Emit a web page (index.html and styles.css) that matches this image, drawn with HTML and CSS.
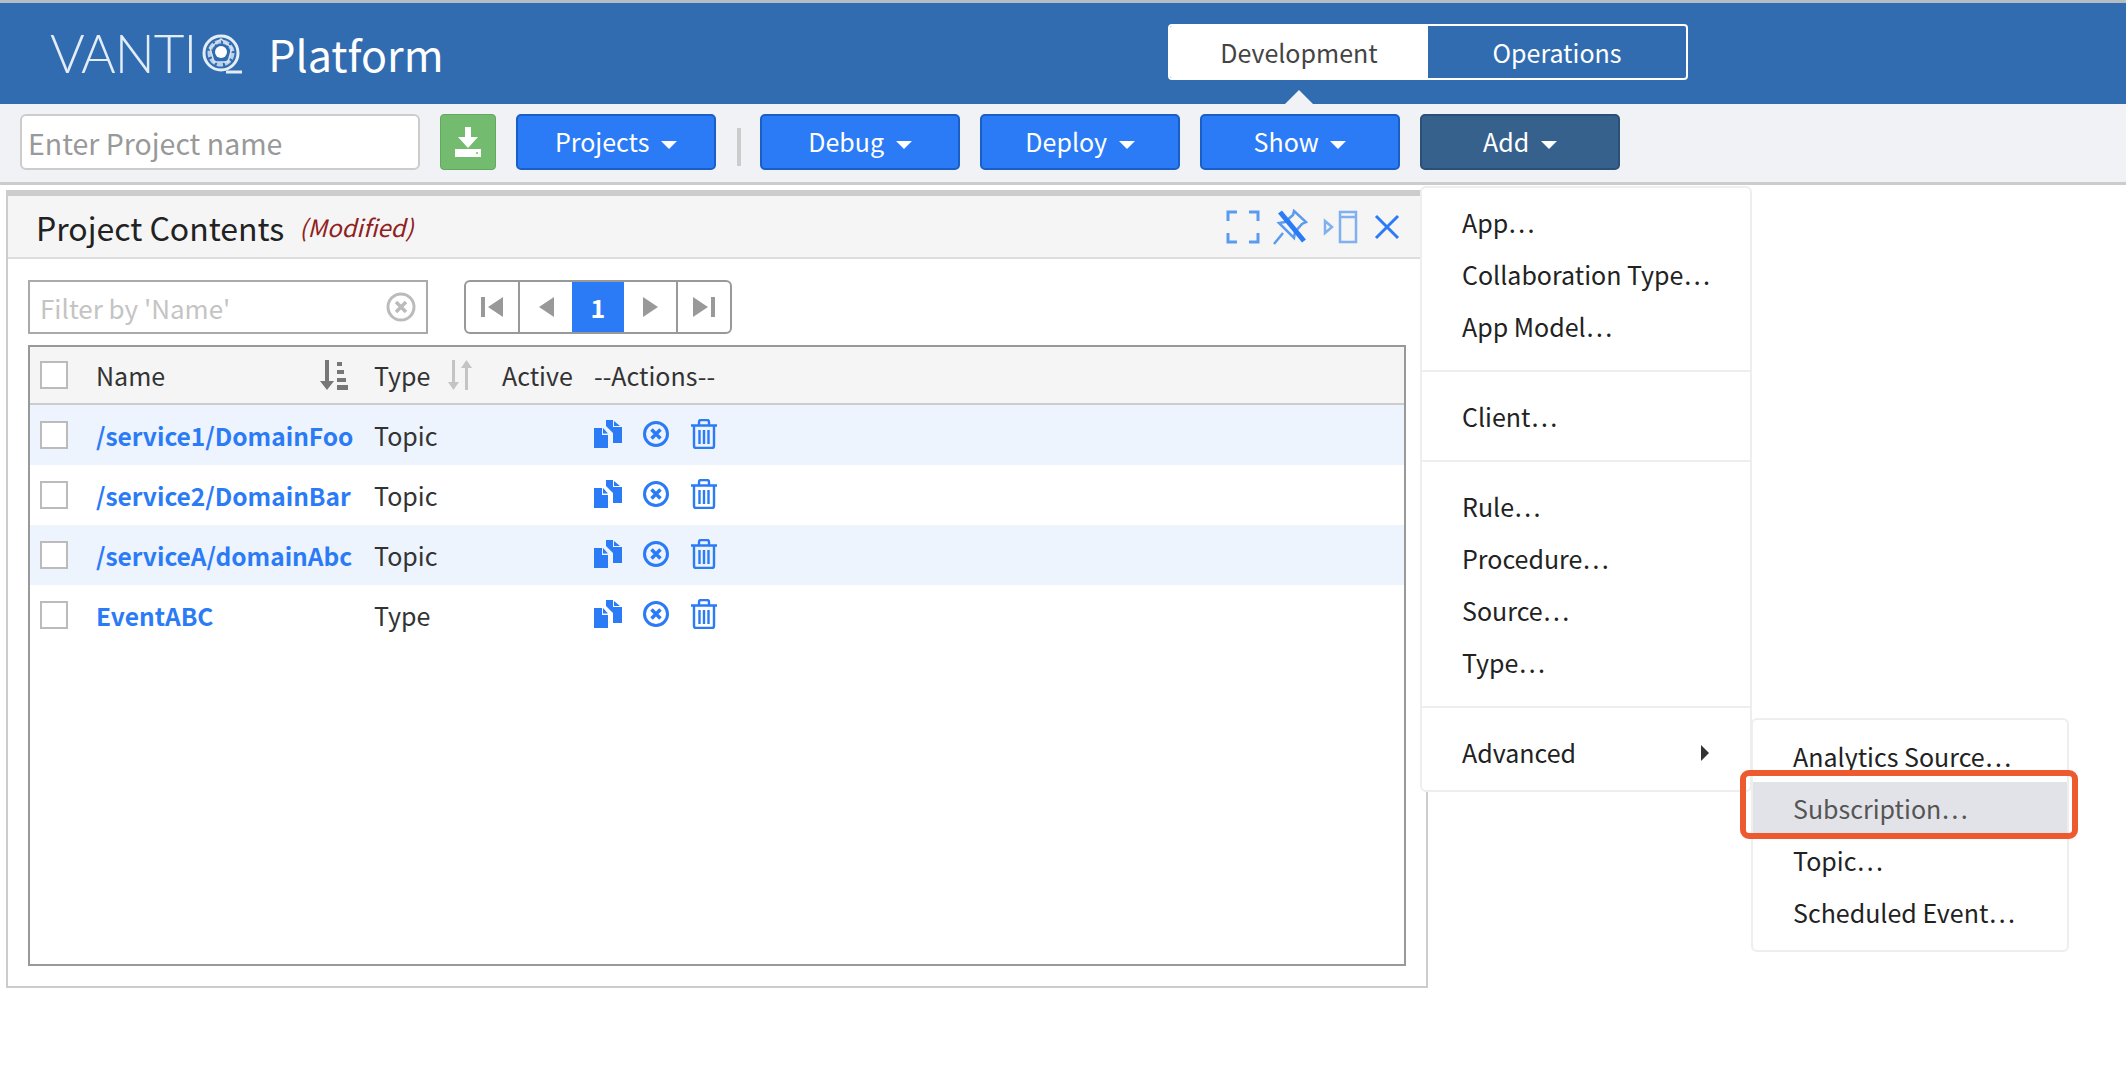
FILE: index.html
```html
<!DOCTYPE html>
<html>
<head>
  <title>VANTIQ Platform</title>
  <link rel="stylesheet" href="styles.css">
</head>
<body>
  <svg class="defs" width="0" height="0">
    <symbol id="i-copy" viewBox="0 0 28 28">
      <path d="M0 8h8v7h6v13H0z M9 8l5 5.500H9z"/>
      <path d="M12 0h7v7h9v16h-9V13l-7-7z M20 1l6 5h-6z"/>
    </symbol>
    <symbol id="i-cancel" viewBox="0 0 28 28">
      <circle cx="14" cy="14" r="11.500" fill="none" stroke="currentColor" stroke-width="3"/>
      <path d="M9.500 9.500l9 9m0-9l-9 9" fill="none" stroke="currentColor" stroke-width="3.500"/>
    </symbol>
    <symbol id="i-trash" viewBox="0 0 28 30">
      <path d="M1 6.500h26M9 6V3a2 2 0 0 1 2-2h6a2 2 0 0 1 2 2v3M4 7v20a2 2 0 0 0 2 2h16a2 2 0 0 0 2-2V7M9.500 11v14M14 11v14M18.500 11v14" fill="none" stroke="currentColor" stroke-width="2.400"/>
    </symbol>
  </svg>

  <header class="topbar">
    <div class="brand">
      <span class="brand-logo">VANTI</span>
      <svg class="brand-q" viewBox="0 0 40 40" width="40" height="40">
        <circle cx="19" cy="19" r="17" fill="none" stroke="#e3edf7" stroke-width="3"/>
        <circle cx="19" cy="19" r="11.500" fill="none" stroke="#b9d0e8" stroke-width="4" stroke-dasharray="6 2"/>
        <path d="M8 14l11-9 11 9-4 14H12z" fill="none" stroke="#d5e3f2" stroke-width="1.500"/>
        <circle cx="19" cy="18" r="6" fill="#fff"/>
        <path d="M24 38h16" stroke="#e3edf7" stroke-width="3"/>
      </svg>
      <span class="brand-name">Platform</span>
    </div>
    <div class="mode-tabs">
      <a class="mode-tab active">Development</a>
      <a class="mode-tab">Operations</a>
    </div>
    <span class="mode-caret"></span>
  </header>

  <div class="toolbar">
    <input class="project-input" type="text" placeholder="Enter Project name">
    <button class="btn-save" type="button">
      <svg viewBox="0 0 26 30" width="26" height="30">
        <path d="M10 0h6v10h7L13 21 3 10h7z" fill="#fff"/>
        <path d="M0 22h26v8H0z" fill="#fff"/>
        <circle cx="22" cy="26" r="1" fill="#72bb6f"/>
      </svg>
    </button>
    <button class="btn" type="button">Projects <i class="caret"></i></button>
    <span class="sep"></span>
    <button class="btn" type="button">Debug <i class="caret"></i></button>
    <button class="btn" type="button">Deploy <i class="caret"></i></button>
    <button class="btn" type="button">Show <i class="caret"></i></button>
    <button class="btn open" type="button">Add <i class="caret"></i></button>
  </div>

  <section class="panel">
    <div class="panel-head">
      <h2>Project Contents</h2>
      <em>(Modified)</em>
      <div class="panel-tools">
        <svg viewBox="0 0 34 34" width="34" height="34" fill="none" stroke="#5b9bef" stroke-width="3">
          <path d="M11 2H2v9M23 2h9v9M2 23v9h9M32 23v9h-9"/>
        </svg>
        <svg viewBox="0 0 36 36" width="36" height="36" fill="none" stroke="#5b9bef" stroke-width="2.500">
          <path d="M22 2l12 11-4 2-7 8-1 6-15-15 6-1 8-7z"/>
          <path d="M11 24L2 35"/>
          <path d="M8 3l24 29" stroke="#2b7bf6" stroke-width="5"/>
        </svg>
        <svg viewBox="0 0 36 34" width="36" height="34" fill="none" stroke="#7fb0f0" stroke-width="2.500">
          <path d="M2 11l7 6-7 6z"/>
          <path d="M17 2h16v30H17zM17 7h16"/>
        </svg>
        <svg viewBox="0 0 26 26" width="26" height="26" fill="none" stroke="#2b7bf6" stroke-width="3">
          <path d="M2 2l22 22M24 2L2 24"/>
        </svg>
      </div>
    </div>

    <div class="panel-body">
      <div class="filter-row">
        <div class="filter">
          <input type="text" placeholder="Filter by 'Name'">
          <svg viewBox="0 0 30 30" width="30" height="30">
            <circle cx="15" cy="15" r="13" fill="none" stroke="#bbb" stroke-width="3"/>
            <path d="M10 10l10 10m0-10L10 20" stroke="#bbb" stroke-width="3.500"/>
          </svg>
        </div>
        <div class="pager">
          <a class="first"><svg viewBox="0 0 22 20" width="22" height="20"><path d="M0 0h4v20H0zM22 0v20L7 10z"/></svg></a>
          <a><svg viewBox="0 0 15 20" width="15" height="20"><path d="M15 0v20L0 10z"/></svg></a>
          <a class="current">1</a>
          <a><svg viewBox="0 0 15 20" width="15" height="20"><path d="M0 0v20l15-10z"/></svg></a>
          <a class="last"><svg viewBox="0 0 22 20" width="22" height="20"><path d="M18 0h4v20h-4zM0 0v20l15-10z"/></svg></a>
        </div>
      </div>

      <div class="grid">
        <div class="grid-row grid-head">
          <span class="cb"></span>
          <span class="col-name">Name
            <svg viewBox="0 0 28 30" width="28" height="30" fill="#777">
              <path d="M5 0h4v21h5l-7 9-7-9h5z"/>
              <path d="M17 2h5v4h-5zM17 10h7v4h-7zM17 18h9v4h-9zM17 25h11v5H17z"/>
            </svg>
          </span>
          <span class="col-type">Type
            <svg viewBox="0 0 24 30" width="24" height="30" fill="#c4c4c4">
              <path d="M4 0h3v22h4l-5.500 8L0 22h4zM17 30h3V8h4l-5.500-8L13 8h4z"/>
            </svg>
          </span>
          <span class="col-active">Active</span>
          <span class="col-actions">--Actions--</span>
        </div>
        <div class="grid-row striped">
          <span class="cb"></span>
          <a class="col-name">/service1/DomainFoo</a>
          <span class="col-type">Topic</span>
          <span class="col-active"></span>
          <span class="col-actions icons">
            <svg class="ic" width="28" height="28"><use href="#i-copy"/></svg>
            <svg class="ic" width="28" height="28"><use href="#i-cancel"/></svg>
            <svg class="ic" width="28" height="30"><use href="#i-trash"/></svg>
          </span>
        </div>
        <div class="grid-row">
          <span class="cb"></span>
          <a class="col-name">/service2/DomainBar</a>
          <span class="col-type">Topic</span>
          <span class="col-active"></span>
          <span class="col-actions icons">
            <svg class="ic" width="28" height="28"><use href="#i-copy"/></svg>
            <svg class="ic" width="28" height="28"><use href="#i-cancel"/></svg>
            <svg class="ic" width="28" height="30"><use href="#i-trash"/></svg>
          </span>
        </div>
        <div class="grid-row striped">
          <span class="cb"></span>
          <a class="col-name">/serviceA/domainAbc</a>
          <span class="col-type">Topic</span>
          <span class="col-active"></span>
          <span class="col-actions icons">
            <svg class="ic" width="28" height="28"><use href="#i-copy"/></svg>
            <svg class="ic" width="28" height="28"><use href="#i-cancel"/></svg>
            <svg class="ic" width="28" height="30"><use href="#i-trash"/></svg>
          </span>
        </div>
        <div class="grid-row">
          <span class="cb"></span>
          <a class="col-name">EventABC</a>
          <span class="col-type">Type</span>
          <span class="col-active"></span>
          <span class="col-actions icons">
            <svg class="ic" width="28" height="28"><use href="#i-copy"/></svg>
            <svg class="ic" width="28" height="28"><use href="#i-cancel"/></svg>
            <svg class="ic" width="28" height="30"><use href="#i-trash"/></svg>
          </span>
        </div>
      </div>
    </div>
  </section>

  <ul class="menu add-menu">
    <li>App…</li>
    <li>Collaboration Type…</li>
    <li>App Model…</li>
    <li class="divider"></li>
    <li>Client…</li>
    <li class="divider"></li>
    <li>Rule…</li>
    <li>Procedure…</li>
    <li>Source…</li>
    <li>Type…</li>
    <li class="divider"></li>
    <li class="has-sub">Advanced <i class="caret-right"></i></li>
  </ul>

  <ul class="menu sub-menu">
    <li>Analytics Source…</li>
    <li class="hover">Subscription…</li>
    <li>Topic…</li>
    <li>Scheduled Event…</li>
  </ul>
  <div class="callout"></div>
</body>
</html>
```

FILE: styles.css
```css
* { box-sizing: border-box; }
body { margin: 0; background: #fff; color: #333; font-family: "Noto Sans CJK JP", "Source Sans Pro", "Open Sans", sans-serif; font-size: 25px; border-top: 3px solid #b5bcc4; height: 1082px; overflow: hidden; position: relative; }
.defs { position: absolute; }

.topbar { position: relative; height: 101px; background: #326cb0; display: flex; align-items: center; justify-content: space-between; padding: 0 438px 4px 50px; }
.brand { display: flex; align-items: center; color: #fff; margin-top: 2px; }
.brand-logo { font-family: Lato, sans-serif; font-weight: 300; font-size: 53px; line-height: 60px; color: #e3edf7; letter-spacing: -1px; }
.brand-q { margin-left: 6px; margin-top: 2px; }
.brand-name { font-size: 43px; margin-left: 26px; }
.mode-tabs { display: flex; width: 520px; height: 56px; border: 2px solid #fff; border-radius: 4px; overflow: hidden; }
.mode-tab { width: 50%; display: flex; align-items: center; justify-content: center; color: #fff; }
.mode-tab.active { background: #fff; color: #444; }
.mode-caret { position: absolute; left: 1285px; bottom: 0; border: 14px solid transparent; border-top: 0; border-bottom-color: #f0f2f5; }

.toolbar { height: 81px; background: #f0f2f5; border-bottom: 3px solid #ccc; display: flex; align-items: flex-start; padding: 10px 0 0 20px; }
.project-input { width: 400px; height: 56px; border: 2px solid #ccc; border-radius: 6px; padding: 0 6px; font: inherit; font-size: 28.500px; margin-right: 20px; }
.project-input::placeholder { color: #999; }
.btn-save { width: 56px; height: 56px; background: #72bb6f; border: 1px solid #62a85f; border-radius: 4px; margin-right: 20px; padding: 0; display: flex; align-items: center; justify-content: center; }
.btn { width: 200px; height: 56px; background: #2b7bf6; color: #fff; border: 2px solid #1a5fc8; border-radius: 5px; font: inherit; margin-right: 20px; padding: 0 0 3px; }
.btn.open { background: #35618c; border-color: #2a5078; }
.caret { display: inline-block; margin-left: 6px; vertical-align: middle; border: 8px solid transparent; border-bottom: 0; border-top-color: #fff; }
.sep { width: 4px; height: 38px; background: #ccc; margin: 14px 19px 0 1px; }

.panel { width: 1422px; height: 798px; margin: 5px 0 0 6px; border: 2px solid #ccc; border-top-width: 6px; display: flex; flex-direction: column; }
.panel-head { height: 63px; background: #f5f5f5; border-bottom: 2px solid #ddd; display: flex; align-items: center; padding-left: 28px; }
.panel-head h2 { margin: 0; font-size: 32px; font-weight: 400; color: #222; }
.panel-head em { margin-left: 15px; font-size: 24px; color: #8f2020; }
.panel-tools { margin-left: auto; margin-right: 26px; display: flex; align-items: center; gap: 15px; }
.panel-tools svg:first-child { margin-right: -3px; }

.panel-body { flex: 1; padding: 21px 20px 20px 20px; display: flex; flex-direction: column; }
.filter-row { display: flex; gap: 36px; margin-bottom: 11px; }
.filter { width: 400px; height: 54px; border: 2px solid #aaa; display: flex; align-items: center; padding: 0 10px; }
.filter input { flex: 1; min-width: 0; border: 0; outline: 0; font: inherit; font-size: 26px; padding: 0; }
.filter input::placeholder { color: #c4c4c4; }
.pager { display: flex; height: 54px; border: 2px solid #999; border-radius: 6px; overflow: hidden; }
.pager a { width: 52px; display: flex; align-items: center; justify-content: center; fill: #999; }
.pager a.first { width: 54px; border-right: 2px solid #999; }
.pager a.last { width: 54px; border-left: 2px solid #999; }
.pager a.current { background: #2b7bf6; color: #fff; font-weight: 700; }

.grid { flex: 1; border: 2px solid #999; }
.grid-row { display: flex; align-items: center; height: 60px; padding-left: 10px; }
.grid-head { height: 58px; background: #f5f5f5; border-bottom: 2px solid #ccc; }
.striped { background: #edf4fd; }
.cb { width: 28px; height: 28px; border: 2px solid #bbb; background: #fff; flex: none; margin-right: 28px; }
.col-name { width: 278px; display: flex; justify-content: space-between; align-items: center; padding-right: 26px; }
a.col-name { color: #2b7bf6; font-size: 24.500px; font-weight: 600; white-space: nowrap; padding-right: 0; }
.col-type { width: 128px; display: flex; align-items: center; gap: 18px; }
.col-active { width: 92px; }
.col-actions { flex: 1; }
.icons { display: flex; align-items: center; gap: 20px; color: #2b7bf6; margin-top: -3px; }
.ic { fill: currentColor; flex: none; }

.menu { position: absolute; margin: 0; padding: 0; list-style: none; background: #fff; border: 2px solid #eee; border-radius: 6px; }
.menu li { height: 52px; padding-left: 40px; display: flex; align-items: center; color: #222; }
.menu li.divider { height: 2px; background: #eee; padding: 0; margin: 18px 0; }
.add-menu { left: 1420px; top: 183px; width: 332px; padding: 8px 0 12px; }
.add-menu .has-sub { position: relative; }
.caret-right { position: absolute; left: 279px; top: 19px; border: 8px solid transparent; border-right: 0; border-left-color: #333; }
.sub-menu { left: 1751px; top: 715px; width: 318px; padding: 10px 0 12px; }
.sub-menu li { padding-left: 40px; }
.sub-menu li.hover { background: #e2e3e8; color: #555; }
.callout { position: absolute; left: 1740px; top: 767px; width: 338px; height: 69px; border: 6px solid #ee5a30; border-radius: 9px; }
```
